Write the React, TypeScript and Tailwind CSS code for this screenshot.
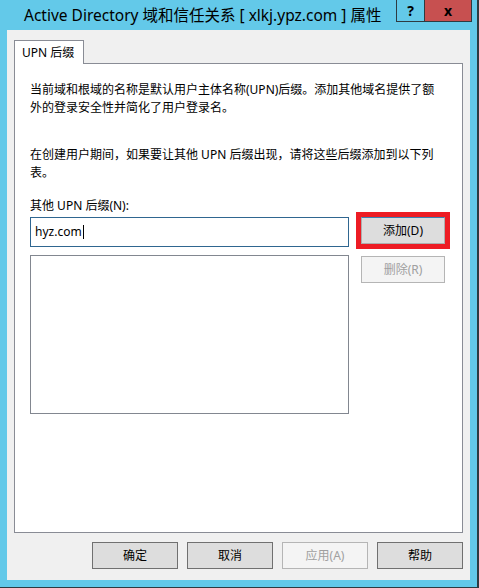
import React from 'react';

const font = { fontFamily: "'Noto Sans', 'Noto Sans CJK SC', sans-serif" };

function DlgButton({ label, disabled = false }: { label: string; disabled?: boolean }) {
  return (
    <div
      className={`flex h-[27px] w-[86px] items-center justify-center border text-[12px] ${
        disabled ? 'border-[#b5b5b5] bg-[#f4f4f4] text-[#a0a0a0]' : 'border-[#707070] bg-[#dddddd] text-black'
      }`}
    >
      {label}
    </div>
  );
}

export default function App() {
  return (
    <div
      className="flex h-[588px] w-[479px] flex-col border-r-2 border-b border-[#2e3b41] bg-[#63c9e9]"
      style={font}
    >
      {/* title bar */}
      <div className="flex h-[30px] shrink-0 items-start">
        <div className="pl-[24px] pt-[3px] text-[15.5px] leading-[24px] text-black">
          Active Directory 域和信任关系 [ xlkj.ypz.com ] 属性
        </div>
        <div className="ml-auto flex h-[22px]">
          <div className="flex w-[29px] items-center justify-center border border-t-0 border-[#2e3b41] text-[14px] font-bold leading-none text-black">
            ?
          </div>
          <div className="flex w-[47px] items-center justify-center border border-t-0 border-l-0 border-[#2e3b41] bg-[#c75050] text-[14px] font-bold leading-none text-black">
            x
          </div>
        </div>
        <div className="w-[5px]" />
      </div>

      {/* client area */}
      <div className="ml-[7px] mr-[7px] flex h-[550px] flex-col bg-[#f0f0f0] px-[7px] pt-[10px]">
        <div className="flex">
          <div className="relative z-10 -mb-px flex h-[24px] w-[70px] items-center border border-b-0 border-[#898c95] bg-white pl-[7px] text-[12px] text-black">
            UPN 后缀
          </div>
        </div>
        <div className="h-[470px] border border-[#898c95] bg-white px-[15px] pt-[17px] text-[12px] leading-[18px] text-black">
          <p>当前域和根域的名称是默认用户主体名称(UPN)后缀。添加其他域名提供了额</p>
          <p>外的登录安全性并简化了用户登录名。</p>
          <p className="mt-[29px]">在创建用户期间，如果要让其他 UPN 后缀出现，请将这些后缀添加到以下列</p>
          <p>表。</p>
          <p className="mt-[15px]">其他 UPN 后缀(N):</p>
          <div className="mt-[2px] flex gap-[12px]">
            <div className="flex flex-col gap-[8px]">
              <div className="flex h-[30px] w-[319px] items-center border border-[#2f6690] pl-[4px] text-[12px]">
                <span>hyz.com</span>
                <span className="ml-px h-[14px] w-px bg-black" />
              </div>
              <div className="h-[159px] w-[319px] border border-[#828790] bg-white" />
            </div>
            <div className="flex flex-col gap-[12px]">
              <div className="flex h-[27px] w-[84px] items-center justify-center border border-[#aeaeae] border-t-[#3c7fb1] bg-[#dddddd] text-black outline-[5px] outline-[#ed1c24] outline-solid">
                添加(D)
              </div>
              <div className="flex h-[27px] w-[84px] items-center justify-center border border-[#b5b5b5] bg-[#f4f4f4] text-[#a0a0a0]">
                删除(R)
              </div>
            </div>
          </div>
        </div>
        <div className="mt-[9px] flex justify-end gap-[9px]">
          <DlgButton label="确定" />
          <DlgButton label="取消" />
          <DlgButton label="应用(A)" disabled />
          <DlgButton label="帮助" />
        </div>
      </div>
    </div>
  );
}
